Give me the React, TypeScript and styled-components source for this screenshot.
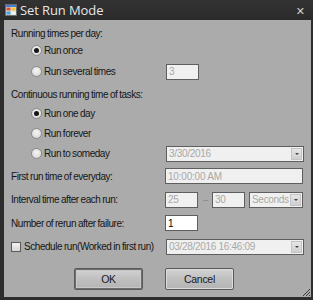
import React from "react";
import styled, { createGlobalStyle } from "styled-components";

const Global = createGlobalStyle`
  html, body { margin: 0; padding: 0; background: #2d2d2d; }
  #root { width: 313px; height: 300px; }
`;

const Window = styled.div`
  width: 313px;
  height: 300px;
  background: #2d2d2d;
  display: flex;
  flex-direction: column;
  font-family: "Liberation Sans", Arial, sans-serif;
`;

const TitleBar = styled.div`
  height: 20px;
  display: flex;
  align-items: center;
  padding: 0 8px 0 5px;
  background: linear-gradient(#333333, #2a2a2a);
`;

const Title = styled.div`
  font-family: "Open Sans", "Noto Sans", sans-serif;
  font-size: 13px;
  color: #e6e6e6;
  margin-left: 3px;
  letter-spacing: -0.1px;
  flex: 1;
`;

const Close = styled.div`
  font-family: "DejaVu Sans", sans-serif;
  font-size: 11px;
  font-weight: bold;
  color: #d0d0d0;
  margin-top: 2px;
`;

const Client = styled.div`
  flex: 1;
  margin: 0 2px 3px 4px;
  background: #ababab;
  padding: 4px 0 0 7px;
  position: relative;
  display: flex;
  flex-direction: column;
`;

const Row = styled.div<{ $h: number; $indent?: number }>`
  height: ${(p) => p.$h}px;
  display: flex;
  align-items: center;
  padding-left: ${(p) => p.$indent ?? 0}px;
`;

const Label = styled.span<{ $w?: number }>`
  font-size: 10px;
  letter-spacing: -0.45px;
  word-spacing: -0.5px;
  color: #161616;
  white-space: nowrap;
  width: ${(p) => (p.$w ? `${p.$w}px` : "auto")};
  flex-shrink: 0;
`;

const RadioCircle = styled.span<{ $on?: boolean }>`
  width: 9px;
  height: 9px;
  border-radius: 50%;
  border: 1px solid #8a8a8a;
  background: radial-gradient(circle at 50% 40%, #f6f6f6, #d2d2d2);
  display: inline-flex;
  align-items: center;
  justify-content: center;
  margin-right: 2px;
  flex-shrink: 0;
  &::after {
    content: "";
    width: 5px;
    height: 5px;
    border-radius: 50%;
    background: ${(p) => (p.$on ? "#151515" : "transparent")};
  }
`;

const CheckBox = styled.span`
  width: 8px;
  height: 8px;
  border: 1px solid #5a5a5a;
  background: linear-gradient(#f4f4f4, #d6d6d6);
  margin-right: 3px;
  flex-shrink: 0;
`;

const Box = styled.div<{ $w: number; $enabled?: boolean }>`
  width: ${(p) => p.$w}px;
  height: 16px;
  box-sizing: border-box;
  border: 1px solid #5e5e5e;
  background: ${(p) => (p.$enabled ? "#ffffff" : "#f0f0f0")};
  color: ${(p) => (p.$enabled ? "#000000" : "#a8a8a8")};
  font-size: 10px;
  letter-spacing: -0.2px;
  display: flex;
  align-items: center;
  padding-left: 2px;
  flex-shrink: 0;
  position: relative;
`;

const ComboText = styled.span`
  flex: 1;
  min-width: 0;
  white-space: nowrap;
  overflow: hidden;
  letter-spacing: -0.3px;
`;

const ArrowBtn = styled.span`
  width: 11px;
  height: 12px;
  margin-right: 1px;
  box-sizing: border-box;
  border: 1px solid #c4c4c4;
  background: linear-gradient(#e6e6e6, #cfcfcf);
  display: flex;
  align-items: center;
  justify-content: center;
  flex-shrink: 0;
  &::after {
    content: "";
    border-left: 2px solid transparent;
    border-right: 2px solid transparent;
    border-top: 2px solid #444;
  }
`;

const Dash = styled.span`
  width: 14px;
  text-align: center;
  font-size: 10px;
  color: #8a8a8a;
  letter-spacing: -1px;
`;

const Spacer = styled.span<{ $w: number }>`
  width: ${(p) => p.$w}px;
  flex-shrink: 0;
`;

const ButtonRow = styled.div`
  display: flex;
  padding: 11px 0 0 63px;
  gap: 22px;
`;

const Button = styled.div<{ $default?: boolean }>`
  width: 69px;
  height: 22px;
  box-sizing: border-box;
  border: 1px solid #5a5a5a;
  border-radius: 2px;
  background: linear-gradient(#d4d4d4, #bfbfbf 50%, #b4b4b4);
  box-shadow: ${(p) =>
    p.$default
      ? "inset 0 0 0 1px #6e6e6e, inset 0 0 0 2px #c8c8c8"
      : "inset 0 0 0 1px #dcdcdc"};
  display: flex;
  align-items: center;
  justify-content: center;
  font-size: 10.5px;
  letter-spacing: -0.3px;
  color: #1a1a1a;
`;

const Grip = styled.svg`
  position: absolute;
  right: 0;
  bottom: 0;
`;

const AppIcon = () => (
  <svg width="12" height="12" viewBox="0 0 12 12">
    <rect x="0.5" y="0.5" width="11" height="11" fill="#dcdcdc" stroke="#6d6d6d" />
    <rect x="1" y="1" width="10" height="2" fill="#3f7fd6" />
    <rect x="1.5" y="3.5" width="4" height="3" fill="#e24a2a" />
    <rect x="6.5" y="3.5" width="4" height="3" fill="#f2c230" />
    <rect x="1.5" y="7.5" width="4" height="3" fill="#3da6e0" />
    <rect x="6.5" y="7.5" width="4" height="3" fill="#f4f4f4" />
  </svg>
);

const Radio = ({ on, text }: { on?: boolean; text: string }) => (
  <>
    <RadioCircle $on={on} />
    <Label>{text}</Label>
  </>
);

const Combo = ({ w, text }: { w: number; text: string }) => (
  <Box $w={w}>
    <ComboText>{text}</ComboText>
    <ArrowBtn />
  </Box>
);

export default function App() {
  return (
    <>
      <Global />
      <Window>
        <TitleBar>
          <AppIcon />
          <Title>Set Run Mode</Title>
          <Close>✕</Close>
        </TitleBar>
        <Client>
          <Row $h={18}>
            <Label>Running times per day:</Label>
          </Row>
          <Row $h={17} $indent={20}>
            <Radio on text="Run once" />
          </Row>
          <Row $h={25} $indent={20}>
            <RadioCircle />
            <Label $w={122}>Run several times</Label>
            <Box $w={33}>3</Box>
          </Row>
          <Row $h={20}>
            <Label>Continuous running time of tasks:</Label>
          </Row>
          <Row $h={19} $indent={20}>
            <Radio on text="Run one day" />
          </Row>
          <Row $h={21} $indent={20}>
            <Radio text="Run forever" />
          </Row>
          <Row $h={19} $indent={20}>
            <RadioCircle />
            <Label $w={122}>Run to someday</Label>
            <Combo w={138} text="3/30/2016" />
          </Row>
          <Row $h={26}>
            <Label $w={154}>First run time of everyday:</Label>
            <Box $w={138}>10:00:00 AM</Box>
          </Row>
          <Row $h={21}>
            <Label $w={154}>Interval time after each run:</Label>
            <Box $w={33}>25</Box>
            <Dash>--</Dash>
            <Box $w={33}>30</Box>
            <Spacer $w={4} />
            <Combo w={54} text="Seconds" />
          </Row>
          <Row $h={26}>
            <Label $w={154}>Number of rerun after failure:</Label>
            <Box $w={33} $enabled>
              1
            </Box>
          </Row>
          <Row $h={21}>
            <CheckBox />
            <Label $w={142}>Schedule run(Worked in first run)</Label>
            <Combo w={138} text="03/28/2016 16:46:09" />
          </Row>
          <ButtonRow>
            <Button $default>OK</Button>
            <Button>Cancel</Button>
          </ButtonRow>
          <Grip width="10" height="10" viewBox="0 0 10 10">
            <g stroke="#3a3a3a" strokeWidth="1">
              <line x1="9" y1="2" x2="2" y2="9" />
              <line x1="9" y1="5" x2="5" y2="9" />
              <line x1="9" y1="8" x2="8" y2="9" />
            </g>
          </Grip>
        </Client>
      </Window>
    </>
  );
}
